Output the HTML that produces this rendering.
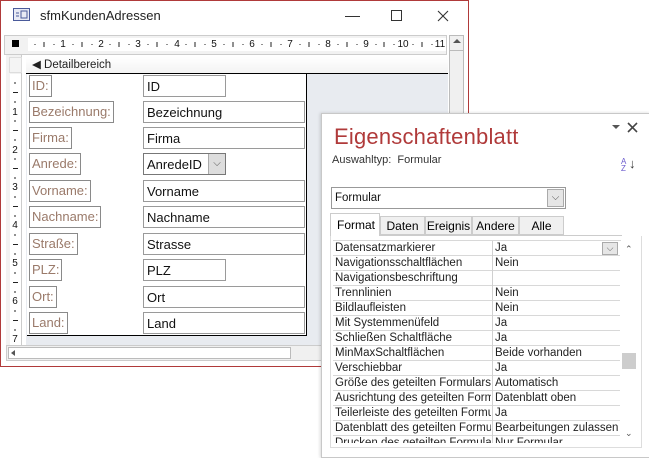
<!DOCTYPE html><html><head><style>
*{margin:0;padding:0;box-sizing:border-box}
body{width:649px;height:455px;background:#fff;position:relative;overflow:hidden;font-family:"Liberation Sans",sans-serif;font-size:12px}
.a{position:absolute}
.lb{position:absolute;border:1px solid #8a8a8a;color:#9a7a6a;font-size:13px;padding:1px 2px;height:22px;line-height:18px;left:29px;background:#fff}
.tb{position:absolute;border:1px solid #9a9a9a;color:#111;font-size:13px;padding:1px 3px;height:22px;line-height:19px;left:143px;width:162px;background:#fff}
.row{position:absolute;left:333px;width:287px;height:15px;border-bottom:1px solid #d8d8d8;font-size:11.5px;line-height:14px;color:#222}
.row span{position:absolute;left:2px;width:156px;overflow:hidden;white-space:nowrap}
.row b{font-weight:normal;position:absolute;left:162px;white-space:nowrap;width:125px;overflow:hidden}
.rn{position:absolute;top:38px;font-size:10px;line-height:13px;color:#111;transform:translateX(-50%)}
.vn{position:absolute;left:10px;width:10px;text-align:center;font-size:10px;line-height:10px;color:#111}
.tk{position:absolute;background:#222}
</style></head><body>
<div class="a" style="left:0;top:0;width:469px;height:367px;border:1px solid #b03a3a;background:#fff"></div>
<svg class="a" style="left:13px;top:8px" width="18" height="14"><rect x="0.5" y="0.5" width="16" height="12" fill="#e8eaf4" stroke="#4a5a9a"/><line x1="3" y1="5" x2="6" y2="5" stroke="#4a5a9a"/><line x1="3" y1="8" x2="6" y2="8" stroke="#4a5a9a"/><rect x="8" y="3" width="6" height="7" fill="none" stroke="#4a5a9a"/></svg>
<div class="a" style="left:40px;top:8px;font-size:13px;color:#222">sfmKundenAdressen</div>
<div class="a" style="left:345px;top:16px;width:15px;height:1px;background:#333"></div>
<div class="a" style="left:391px;top:10px;width:11px;height:11px;border:1px solid #333"></div>
<svg class="a" style="left:437px;top:10px" width="12" height="12"><path d="M1 1L11 11M11 1L1 11" stroke="#333" stroke-width="1.1"/></svg>
<div class="a" style="left:4px;top:35px;width:443px;height:20px;background:#f2f2f2;border:1px solid #ccc"></div>
<div class="a" style="left:12px;top:40px;width:7px;height:7px;background:#000"></div>
<div class="a" style="left:28px;top:38px;width:418px;height:13px;background:#fff"></div>
<div class="rn" style="left:63px">1</div><div class="rn" style="left:101px">2</div><div class="rn" style="left:138px">3</div><div class="rn" style="left:177px">4</div><div class="rn" style="left:214px">5</div><div class="rn" style="left:252px">6</div><div class="rn" style="left:290px">7</div><div class="rn" style="left:328px">8</div><div class="rn" style="left:366px">9</div><div class="rn" style="left:403px">10</div><div class="rn" style="left:440px">11</div>
<svg class="a" style="left:28px;top:38px" width="418" height="13">
<g stroke="#222" stroke-width="1">
<path d="M7 6v1M16 4v5M26 6v1M45 6v1M54 4v5M64 6v1M82 6v1M91 4v5M101 6v1M120 6v1M129 4v5M139 6v1M158 6v1M167 4v5M177 6v1M196 6v1M205 4v5M215 6v1M234 6v1M243 4v5M253 6v1M272 6v1M281 4v5M291 6v1M310 6v1M319 4v5M329 6v1M348 6v1M356 4v5M366 6v1M385 6v1M394 4v5M404 6v1"/>
</g></svg>
<div class="a" style="left:6px;top:55px;width:16px;height:291px;background:#f2f2f2;border-right:1px solid #ccc"></div>
<div class="a" style="left:9px;top:57px;width:13px;height:16px;border:1px solid #ddd;background:#f4f4f4"></div>
<div class="a" style="left:10px;top:74px;width:11px;height:272px;background:#fff"></div>
<svg class="a" style="left:10px;top:74px" width="11" height="272"><g stroke="#222"><path d="M4 9h2M3 18.5h5M4 28h2M4 47h2M3 56.5h5M4 66h2M4 85h2M3 94.5h5M4 104h2M4 123h2M3 132.5h5M4 142h2M4 161h2M3 170.5h5M4 180h2M4 199h2M3 208.5h5M4 218h2M4 237h2M3 246.5h5M4 256h2"/></g></svg>
<div class="vn" style="top:108px">1</div><div class="vn" style="top:146px">2</div><div class="vn" style="top:183px">3</div><div class="vn" style="top:221px">4</div><div class="vn" style="top:259px">5</div><div class="vn" style="top:297px">6</div><div class="vn" style="top:335px">7</div>
<div class="a" style="left:26px;top:57px;width:422px;height:17px;background:linear-gradient(#fff,#f3f3f3);border-bottom:1px solid #000;font-size:11.5px;line-height:16px;padding-left:6px;color:#222">◀ Detailbereich</div>
<div class="a" style="left:26px;top:74px;width:422px;height:272px;background:#e8ebf0"></div>
<div class="a" style="left:27px;top:74px;width:280px;height:262px;background:#fff;border-right:1.5px solid #000;border-bottom:1.5px solid #000"></div>
<div class="a" style="left:449px;top:35px;width:15px;height:311px;background:#f0f0f0;border:1px solid #bbb"></div>
<div class="a" style="left:453px;top:39px;width:0;height:0;border-left:4px solid transparent;border-right:4px solid transparent;border-bottom:4px solid #555"></div>
<div class="a" style="left:450px;top:50px;width:13px;height:1px;background:#bbb"></div>
<div class="a" style="left:6px;top:345px;width:443px;height:16px;background:#f0f0f0;border:1px solid #ccc"></div>
<div class="a" style="left:8px;top:347px;width:283px;height:12px;background:#fff;border:1px solid #bbb"></div>
<div class="a" style="left:11px;top:350px;width:0;height:0;border-top:3px solid transparent;border-bottom:3px solid transparent;border-right:4px solid #555"></div>
<div class="lb" style="top:75px">ID:</div>
<div class="lb" style="top:101px">Bezeichnung:</div>
<div class="lb" style="top:127px">Firma:</div>
<div class="lb" style="top:153px">Anrede:</div>
<div class="lb" style="top:180px">Vorname:</div>
<div class="lb" style="top:206px">Nachname:</div>
<div class="lb" style="top:233px">Straße:</div>
<div class="lb" style="top:259px">PLZ:</div>
<div class="lb" style="top:286px">Ort:</div>
<div class="lb" style="top:312px">Land:</div>
<div class="tb" style="top:75px;width:83px">ID</div>
<div class="tb" style="top:101px">Bezeichnung</div>
<div class="tb" style="top:127px">Firma</div>
<div class="tb" style="top:153px;width:83px;border-color:#777">AnredeID</div>
<div class="a" style="left:208px;top:154px;width:17px;height:20px;background:#ddd;border-left:1px solid #aaa;font-size:10px;text-align:center;line-height:20px;color:#555">⌵</div>
<div class="tb" style="top:180px">Vorname</div>
<div class="tb" style="top:206px">Nachname</div>
<div class="tb" style="top:233px">Strasse</div>
<div class="tb" style="top:259px;width:83px">PLZ</div>
<div class="tb" style="top:286px">Ort</div>
<div class="tb" style="top:312px">Land</div>
<div class="a" style="left:321px;top:113px;width:330px;height:345px;background:#fff;border:1px solid #c8c8c8;box-shadow:-1px 0 3px rgba(0,0,0,.15)"></div>
<div class="a" style="left:334px;top:124px;font-size:22px;color:#b03a3a;letter-spacing:.2px">Eigenschaftenblatt</div>
<div class="a" style="left:612px;top:125px;width:0;height:0;border-left:4px solid transparent;border-right:4px solid transparent;border-top:4px solid #555"></div>
<svg class="a" style="left:627px;top:122px" width="11" height="11"><path d="M1 1L10 10M10 1L1 10" stroke="#444" stroke-width="1.6"/></svg>
<div class="a" style="left:332px;top:154px;font-size:11px;color:#333">Auswahltyp:&nbsp; Formular</div>
<div class="a" style="left:621px;top:158px;font-size:8px;line-height:7px;color:#6a5acd">A<br>Z</div>
<div class="a" style="left:629px;top:156px;font-size:13px;color:#333">↓</div>
<div class="a" style="left:331px;top:187px;width:235px;height:22px;border:1px solid #999;font-size:11.5px;line-height:20px;padding-left:3px;color:#111">Formular</div>
<div class="a" style="left:547px;top:189px;width:17px;height:18px;background:#e6e6e6;border:1px solid #aaa;font-size:10px;text-align:center;line-height:16px;color:#555">⌵</div>
<div class="a" style="left:330px;top:235px;width:292px;height:1px;background:#ccc"></div>
<div class="a" style="left:330px;top:213px;width:50px;height:23px;border:1px solid #ccc;border-bottom:none;background:#fff;font-size:12px;line-height:22px;padding-left:6px">Format</div>
<div class="a" style="left:380px;top:216px;width:45px;height:19px;background:#f0f0f0;border:1px solid #ccc;font-size:12px;line-height:18px;text-align:center">Daten</div>
<div class="a" style="left:425px;top:216px;width:47px;height:19px;background:#f0f0f0;border:1px solid #ccc;font-size:12px;line-height:18px;text-align:center">Ereignis</div>
<div class="a" style="left:472px;top:216px;width:47px;height:19px;background:#f0f0f0;border:1px solid #ccc;font-size:12px;line-height:18px;text-align:center">Andere</div>
<div class="a" style="left:519px;top:216px;width:45px;height:19px;background:#f0f0f0;border:1px solid #ccc;font-size:12px;line-height:18px;text-align:center">Alle</div>
<div class="a" style="left:330px;top:236px;width:312px;height:212px;border:1px solid #ddd;border-top:none"></div>
<div class="a" style="left:333px;top:240px;width:288px;height:203px;overflow:hidden;border-top:1px solid #d8d8d8">
<div class="row" style="left:0;top:0"><span>Datensatzmarkierer</span><b>Ja</b></div>
<div class="row" style="left:0;top:15px"><span>Navigationsschaltflächen</span><b>Nein</b></div>
<div class="row" style="left:0;top:30px"><span>Navigationsbeschriftung</span><b></b></div>
<div class="row" style="left:0;top:45px"><span>Trennlinien</span><b>Nein</b></div>
<div class="row" style="left:0;top:60px"><span>Bildlaufleisten</span><b>Nein</b></div>
<div class="row" style="left:0;top:75px"><span>Mit Systemmenüfeld</span><b>Ja</b></div>
<div class="row" style="left:0;top:90px"><span>Schließen Schaltfläche</span><b>Ja</b></div>
<div class="row" style="left:0;top:105px"><span>MinMaxSchaltflächen</span><b>Beide vorhanden</b></div>
<div class="row" style="left:0;top:120px"><span>Verschiebbar</span><b>Ja</b></div>
<div class="row" style="left:0;top:135px"><span>Größe des geteilten Formulars</span><b>Automatisch</b></div>
<div class="row" style="left:0;top:150px"><span>Ausrichtung des geteilten Formulars</span><b>Datenblatt oben</b></div>
<div class="row" style="left:0;top:165px"><span>Teilerleiste des geteilten Formulars</span><b>Ja</b></div>
<div class="row" style="left:0;top:180px"><span>Datenblatt des geteilten Formulars</span><b>Bearbeitungen zulassen</b></div>
<div class="row" style="left:0;top:195px"><span>Drucken des geteilten Formulars</span><b>Nur Formular</b></div>
<div class="a" style="left:159px;top:0;width:1px;height:203px;background:#d0d0d0"></div>
</div>
<div class="a" style="left:602px;top:242px;width:16px;height:13px;background:#e6e6e6;border:1px solid #aaa;font-size:9px;text-align:center;line-height:11px;color:#555">⌵</div>
<div class="a" style="left:621px;top:240px;width:16px;height:203px;background:#fff"></div>
<div class="a" style="left:625px;top:244px;font-size:9px;color:#555">⌃</div>
<div class="a" style="left:622px;top:353px;width:14px;height:16px;background:#cdcdcd"></div>
<div class="a" style="left:625px;top:428px;font-size:9px;color:#555">⌄</div>
</body></html>
